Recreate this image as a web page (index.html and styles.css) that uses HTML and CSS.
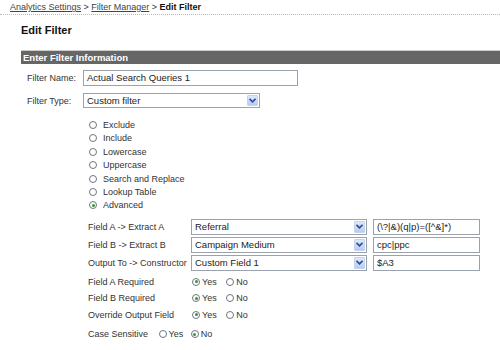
FILE: index.html
```html
<!DOCTYPE html>
<html lang="en">
<head>
  <meta charset="UTF-8">
  <title>Edit Filter</title>
  <link rel="stylesheet" href="styles.css">
</head>
<body>
  <div class="crumbs">
    <a href="#">Analytics Settings</a> &gt; <a href="#">Filter Manager</a> &gt; <b>Edit Filter</b>
  </div>

  <h1>Edit Filter</h1>

  <div class="panel">
    <div class="panel-head">Enter Filter Information</div>

    <div class="row first">
      <label>Filter Name:</label>
      <div class="text wide">Actual Search Queries 1</div>
    </div>
    <div class="row">
      <label>Filter Type:</label>
      <div class="select type">Custom filter<span class="arrow"><svg width="7" height="5" viewBox="0 0 7 5"><path d="M0.5 0.8 L3.5 3.8 L6.5 0.8" fill="none" stroke="#2c4d94" stroke-width="1.6"/></svg></span></div>
    </div>

    <ul class="types">
      <li><span class="radio"></span>Exclude</li>
      <li><span class="radio"></span>Include</li>
      <li><span class="radio"></span>Lowercase</li>
      <li><span class="radio"></span>Uppercase</li>
      <li><span class="radio"></span>Search and Replace</li>
      <li><span class="radio"></span>Lookup Table</li>
      <li><span class="radio on"></span>Advanced</li>
    </ul>

    <div class="fields">
      <label>Field A -&gt; Extract A</label>
      <div class="select">Referral<span class="arrow"><svg width="7" height="5" viewBox="0 0 7 5"><path d="M0.5 0.8 L3.5 3.8 L6.5 0.8" fill="none" stroke="#2c4d94" stroke-width="1.6"/></svg></span></div>
      <div class="text">(\?|&amp;)(q|p)=([^&amp;]*)</div>

      <label>Field B -&gt; Extract B</label>
      <div class="select">Campaign Medium<span class="arrow"><svg width="7" height="5" viewBox="0 0 7 5"><path d="M0.5 0.8 L3.5 3.8 L6.5 0.8" fill="none" stroke="#2c4d94" stroke-width="1.6"/></svg></span></div>
      <div class="text">cpc|ppc</div>

      <label>Output To -&gt; Constructor</label>
      <div class="select">Custom Field 1<span class="arrow"><svg width="7" height="5" viewBox="0 0 7 5"><path d="M0.5 0.8 L3.5 3.8 L6.5 0.8" fill="none" stroke="#2c4d94" stroke-width="1.6"/></svg></span></div>
      <div class="text">$A3</div>
    </div>

    <div class="flags">
      <label>Field A Required</label>
      <div class="choice"><span class="radio on"></span>Yes <span class="radio"></span>No</div>
      <label>Field B Required</label>
      <div class="choice"><span class="radio on"></span>Yes <span class="radio"></span>No</div>
      <label>Override Output Field</label>
      <div class="choice"><span class="radio on"></span>Yes <span class="radio"></span>No</div>
    </div>

    <div class="case">
      <label>Case Sensitive</label>
      <span class="radio"></span>Yes <span class="radio on"></span>No
    </div>
  </div>
</body>
</html>
```

FILE: styles.css
```css
* { margin:0; padding:0; box-sizing:border-box; }
body { font-family:"Liberation Sans", Arial, sans-serif; font-size:9px; color:#333; background:#fff; }

/* хлебные крошки */
.crumbs { height:15px; padding:2px 0 0 10px; border-bottom:1px dotted #bbb; line-height:11px; }
.crumbs a { color:#444; text-decoration:underline; }
.crumbs b { color:#111; }

h1 { font-size:11px; font-weight:bold; color:#111; margin:9px 0 0 21px; line-height:13px; }

/* панель формы */
.panel { margin:13px 0 0 21px; }
.panel-head {
  height:14px; line-height:13px; padding-left:2px; background:#666; color:#fff;
  font-size:9.5px; font-weight:bold; border-top:1px solid #ccc;
}

.row { display:flex; align-items:center; padding-left:6px; margin-top:7px; }
.row.first { margin-top:6px; }
.row label { width:56px; }

.text, .select {
  height:16px; line-height:14px; border:1px solid #9aa3ad; background:#fff;
  padding-left:3px; color:#222; font-size:9.5px; white-space:nowrap;
}
.text.wide { width:215px; }
.select { position:relative; }
.select.type { width:177px; height:15px; line-height:13px; }
.arrow {
  position:absolute; top:1px; right:1px; bottom:1px; width:11px;
  background:linear-gradient(#dfe8fb,#b9cbf3); border:1px solid #c6d3ef; border-radius:1px;
  display:flex; align-items:center; justify-content:center;
}

/* радиокнопки */
.radio {
  display:inline-block; width:8px; height:8px; border:1px solid #6f7780; border-radius:50%;
  background:#fff; position:relative; vertical-align:-1px; margin-right:2px;
}
.radio.on::after {
  content:""; position:absolute; left:1.5px; top:1.5px; width:3px; height:3px; border-radius:50%; background:#2f9a2f;
}

.types { list-style:none; margin:11px 0 0 68px; }
.types li { height:13.4px; line-height:13.4px; }
.types .radio { margin-right:6px; }

.fields {
  display:grid; grid-template-columns:103px 176px 113px; row-gap:2px;
  margin:6px 0 0 67px; align-items:center;
}
.fields .text { margin-left:6px; }

.flags { display:grid; grid-template-columns:104px auto; margin:3px 0 0 67px; }
.flags label, .flags .choice { height:16.5px; line-height:16.5px; }
.choice .radio:nth-of-type(2) { margin-left:7px; }

.case { margin:3px 0 0 67px; height:16px; line-height:16px; }
.case label { margin-right:8px; }
.case .radio:nth-of-type(2) { margin-left:5px; }
```
